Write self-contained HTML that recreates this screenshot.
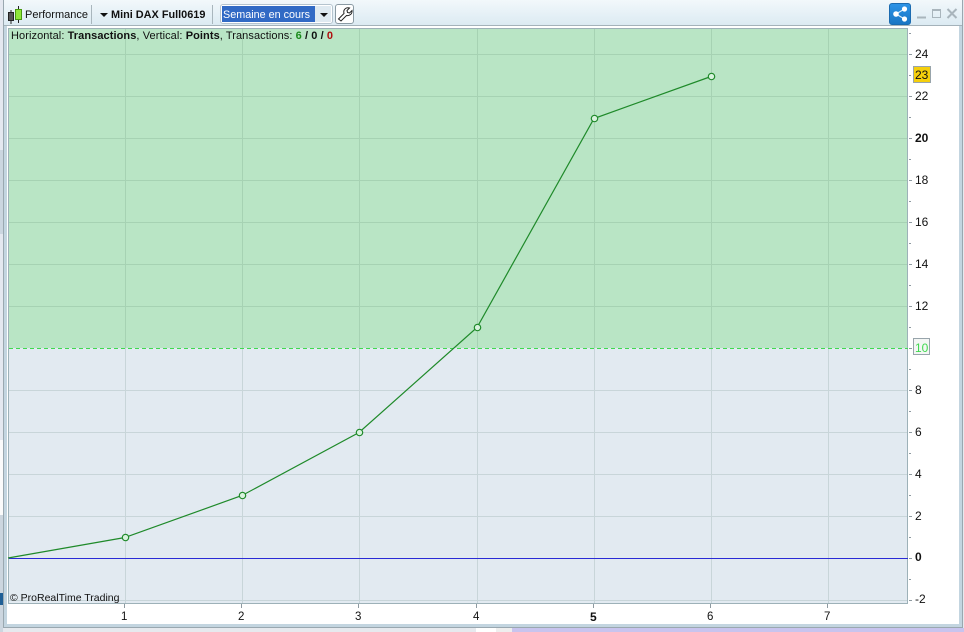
<!DOCTYPE html>
<html><head><meta charset="utf-8"><style>
html,body{margin:0;padding:0;background:#e6e9ee;width:964px;height:632px;overflow:hidden}
body{position:relative;font-family:"Liberation Sans",sans-serif;font-size:11px;color:#111}
.a{position:absolute}
.t{position:absolute;white-space:nowrap;line-height:14px}
</style></head><body>
<div class="a" style="left:0;top:0;width:4px;height:632px;background:#e4e8f0"></div>
<div class="a" style="left:0;top:150px;width:3px;height:84px;background:#cbd6e0"></div>
<div class="a" style="left:0;top:440px;width:3px;height:75px;background:#fbfbfb"></div>
<div class="a" style="left:0;top:515px;width:3px;height:117px;background:#ccd6df"></div>
<div class="a" style="left:0;top:593px;width:3px;height:12px;background:#1f5f96"></div>
<div class="a" style="left:512px;top:628px;width:452px;height:4px;background:#c8c4ee"></div>
<div class="a" style="left:476px;top:628px;width:20px;height:4px;background:#fff"></div>
<div class="a" style="left:496px;top:628px;width:16px;height:4px;background:#eee"></div>
<div class="a" style="left:3px;top:0;width:960px;height:628px;background:#c3d5e0;border:1px solid #9aa8b0;border-top:0;box-sizing:border-box"></div>
<div class="a" style="left:4px;top:0;width:958px;height:26px;background:linear-gradient(#f2f8fb,#dbeaf2)"></div>
<div class="a" style="left:4px;top:25px;width:958px;height:1px;background:#a4b2ba"></div>
<div class="a" style="left:7px;top:26px;width:952px;height:598px;background:#fff"></div>
<svg class="a" style="left:6px;top:5px" width="18" height="20" viewBox="0 0 18 20">
<path d="M5 5V19M12.500 1V18" stroke="#222" stroke-width="1"/>
<rect x="2.500" y="7.500" width="5" height="8" fill="#555" stroke="#222"/>
<rect x="9.500" y="4.500" width="6" height="10" fill="#8fe83a" stroke="#4a9a10"/>
</svg>
<div class="t" style="left:25px;top:8px;font-size:11px">Performance</div>
<div class="a" style="left:91px;top:5px;width:1px;height:19px;background:#a9b6bd"></div>
<div class="a" style="left:100px;top:13px;width:0;height:0;border-left:4px solid transparent;border-right:4px solid transparent;border-top:4px solid #111"></div>
<div class="t" style="left:111px;top:8px;font-weight:bold;font-size:10.900px">Mini DAX Full0619</div>
<div class="a" style="left:212px;top:5px;width:1px;height:19px;background:#a9b6bd"></div>
<div class="a" style="left:220px;top:4px;width:113px;height:20px;background:#fff;border:1px solid #b5c4ce;border-radius:3px;box-sizing:border-box"></div>
<div class="a" style="left:222px;top:6px;width:93px;height:16px;background:#316ac5"></div>
<div class="a" style="left:315px;top:6px;width:16px;height:16px;background:#dfeaf1"></div>
<div class="t" style="left:223px;top:8px;color:#fff;font-size:10.800px">Semaine en cours</div>
<div class="a" style="left:320px;top:13px;width:0;height:0;border-left:4px solid transparent;border-right:4px solid transparent;border-top:4px solid #111"></div>
<div class="a" style="left:335px;top:4px;width:19px;height:20px;background:#fff;border:1px solid #8a9aa3;border-radius:3px;box-sizing:border-box"></div>
<svg class="a" style="left:336px;top:5px" width="17" height="18" viewBox="0 0 17 18"><path d="M2.500 14 L8 8.500 C7 5 9.500 2 13.500 3 L11 5.500 L11.500 7.500 L13.500 8 L16 5.500 C16.500 9 13.500 11 10.500 10.500 L5 16 Z" fill="#fff" stroke="#222" stroke-width="1"/></svg>
<div class="a" style="left:889px;top:3px;width:22px;height:22px;background:linear-gradient(#2c93e6,#1a76c4);border-radius:3px;border:1px solid #1b6bb0;box-sizing:border-box"></div>
<svg class="a" style="left:889px;top:3px" width="22" height="22" viewBox="0 0 22 22"><path d="M15.500 6 L7 11 L15.500 16" stroke="#d8ecfa" stroke-width="1.200" fill="none"/><circle cx="15.500" cy="6" r="2.600" fill="#fff"/><circle cx="7" cy="11" r="2.800" fill="#fff"/><circle cx="15.500" cy="16" r="2.600" fill="#fff"/></svg>
<svg class="a" style="left:915px;top:8px" width="45" height="12" viewBox="0 0 45 12" fill="none" stroke="#a9b5bc"><path d="M2 9.500H11" stroke-width="2"/><rect x="17.500" y="1.500" width="8" height="8" stroke-width="1"/><path d="M17 2H26" stroke-width="2"/><path d="M32.500 1L41.500 10M41.500 1L32.500 10" stroke-width="2"/></svg>

<svg class="a" style="left:0;top:0" width="964" height="632" font-family="'Liberation Sans',sans-serif" font-size="12" shape-rendering="crispEdges">
<rect x="8" y="28" width="900" height="320" fill="#b9e5c5"/>
<rect x="8" y="348" width="900" height="256" fill="#e2eaf1"/>
<g stroke="#a6d2b3" stroke-width="1">
<path d="M8.500 54.500H908M8.500 96.500H908M8.500 138.500H908M8.500 180.500H908M8.500 222.500H908M8.500 264.500H908M8.500 306.500H908"/>
<path d="M125.500 28V348M242.500 28V348M359.500 28V348M477.500 28V348M594.500 28V348M711.500 28V348M828.500 28V348"/>
</g>
<g stroke="#c8d5d9" stroke-width="1">
<path d="M8.500 390.500H908M8.500 432.500H908M8.500 474.500H908M8.500 516.500H908M8.500 600.500H908"/>
<path d="M125.500 348V604M242.500 348V604M359.500 348V604M477.500 348V604M594.500 348V604M711.500 348V604M828.500 348V604"/>
</g>
<path d="M8.500 28V604M907.500 28V604M8 603.500H908M8 28.500H908" stroke="#9db1b8" fill="none"/>
<path d="M9 348.500H908" stroke="#3fd94f" stroke-dasharray="4 3"/>
<path d="M9 558.500H908" stroke="#2a2ad6"/>
<g stroke="#8e9aa1"><path d="M909 33.500H911M909 54.500H912M909 75.500H911M909 96.500H912M909 117.500H911M909 138.500H912M909 159.500H911M909 180.500H912M909 201.500H911M909 222.500H912M909 243.500H911M909 264.500H912M909 285.500H911M909 306.500H912M909 327.500H911M909 348.500H912M909 369.500H911M909 390.500H912M909 411.500H911M909 432.500H912M909 453.500H911M909 474.500H912M909 495.500H911M909 516.500H912M909 537.500H911M909 558.500H912M909 579.500H911M909 600.500H912"/>
<path d="M124.500 604V608M241.500 604V608M358.500 604V608M476.500 604V608M593.500 604V608M710.500 604V608M827.500 604V608"/></g>
<g shape-rendering="auto">
<polyline points="8,558 125,537.500 242,495.500 359,432.500 477,327.500 594,118.500 711,76.500" fill="none" stroke="#1f8a2a" stroke-width="1.200"/>
<g fill="#d8f2de" stroke="#1f8a2a" stroke-width="1.200"><circle cx="125.500" cy="537.500" r="3.200"/><circle cx="242.500" cy="495.500" r="3.200"/><circle cx="359.500" cy="432.500" r="3.200"/><circle cx="477.500" cy="327.500" r="3.200"/><circle cx="594.500" cy="118.500" r="3.200"/><circle cx="711.500" cy="76.500" r="3.200"/></g>
</g>
<rect x="913.500" y="66.500" width="17" height="16" fill="#f5cf0c" stroke="#98a4ab"/>
<rect x="913.500" y="338.500" width="16" height="16" fill="#f3f6f4" stroke="#98a4ab"/>
<g shape-rendering="auto" fill="#111">
<text x="915" y="58">24</text><text x="915" y="79">23</text><text x="915" y="100">22</text><text x="915" y="142" font-weight="bold">20</text><text x="915" y="184">18</text><text x="915" y="226">16</text><text x="915" y="268">14</text><text x="915" y="310">12</text>
<text x="915" y="352" fill="#3fd94f">10</text>
<text x="915" y="394">8</text><text x="915" y="436">6</text><text x="915" y="478">4</text><text x="915" y="520">2</text><text x="915" y="561" font-weight="bold">0</text><text x="915" y="603">-2</text>
<text x="121" y="620" font-size="11.500">1</text><text x="238" y="620" font-size="11.500">2</text><text x="355" y="620" font-size="11.500">3</text><text x="473" y="620" font-size="11.500">4</text><text x="590" y="621" font-weight="bold">5</text><text x="707" y="620" font-size="11.500">6</text><text x="824" y="620" font-size="11.500">7</text>
</g>
</svg>
<div class="t" style="left:11px;top:29px;font-size:11px;letter-spacing:.08px">Horizontal: <b>Transactions</b>, Vertical: <b>Points</b>, Transactions: <b style="color:#1a8a1a">6</b> <b>/ 0 /</b> <b style="color:#b01010">0</b></div>
<div class="t" style="left:10px;top:591px;font-size:10.500px">© ProRealTime Trading</div>
</body></html>
